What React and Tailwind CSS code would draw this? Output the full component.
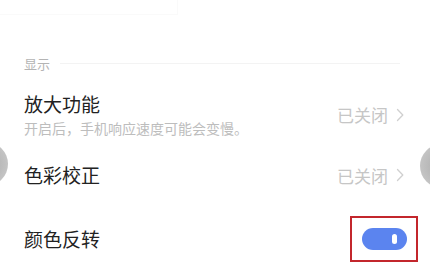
import React from 'react';

const font = { fontFamily: '"Noto Sans CJK SC", "Noto Sans", sans-serif' };

function Chevron() {
  return (
    <svg width="8" height="14" viewBox="0 0 8 14" fill="none" className="ml-[8px]">
      <path d="M1.5 1.5 L6.8 7 L1.5 12.5" stroke="#d0d0d0" strokeWidth="1.3" strokeLinecap="round" strokeLinejoin="round" />
    </svg>
  );
}

function Value({ text }) {
  return (
    <div className="flex items-center">
      <span className="text-[17px] leading-none text-[#c6c6c6]">{text}</span>
      <Chevron />
    </div>
  );
}

export default function App() {
  return (
    <div className="relative w-[430px] h-[280px] overflow-hidden bg-white" style={font}>
      {/* faint edge of the card above */}
      <div className="h-[15px] w-[178px] border-b border-r border-[#fafafa]" />

      {/* section header */}
      <div className="mt-[39px] flex h-[18px] items-center pl-[24px] pr-[30px]">
        <span className="text-[13px] leading-none text-[#b4b4b4]">显示</span>
        <div className="ml-[10px] h-px flex-1 bg-[#f3f3f3]" />
      </div>

      {/* 放大功能 */}
      <div className="mt-[20px] flex items-center justify-between pl-[24px] pr-[26px]">
        <div className="flex flex-col">
          <span className="text-[19px] leading-[24px] text-[#222]">放大功能</span>
          <span className="mt-[3px] text-[14px] leading-[18px] text-[#bdbdbd]">开启后，手机响应速度可能会变慢。</span>
        </div>
        <Value text="已关闭" />
      </div>

      {/* 色彩校正 */}
      <div className="mt-[26px] flex h-[24px] items-center justify-between pl-[24px] pr-[26px]">
        <span className="text-[19px] leading-[24px] text-[#222]">色彩校正</span>
        <Value text="已关闭" />
      </div>

      {/* 颜色反转 */}
      <div className="mt-[29px] flex items-center justify-between pl-[24px] pr-[12px]">
        <span className="text-[19px] leading-[24px] text-[#222]">颜色反转</span>
        <div className="flex h-[46px] w-[68px] items-center justify-center border-2 border-[#c3262c]">
          <div className="flex h-[22px] w-[45px] items-center justify-end rounded-full bg-[#5b84ef] pr-[10px]">
            <div className="h-[10px] w-[5px] rounded-full bg-white" />
          </div>
        </div>
      </div>

      {/* side scroll handles */}
      <div className="absolute left-[-36px] top-[142px] h-[44px] w-[44px] rounded-full bg-[radial-gradient(circle,#a9a9a9_0%,#c4c4c4_70%,#dcdcdc_100%)]" />
      <div className="absolute right-[-34px] top-[144px] h-[44px] w-[44px] rounded-full bg-[radial-gradient(circle,#a9a9a9_0%,#c4c4c4_70%,#dcdcdc_100%)]" />
    </div>
  );
}
